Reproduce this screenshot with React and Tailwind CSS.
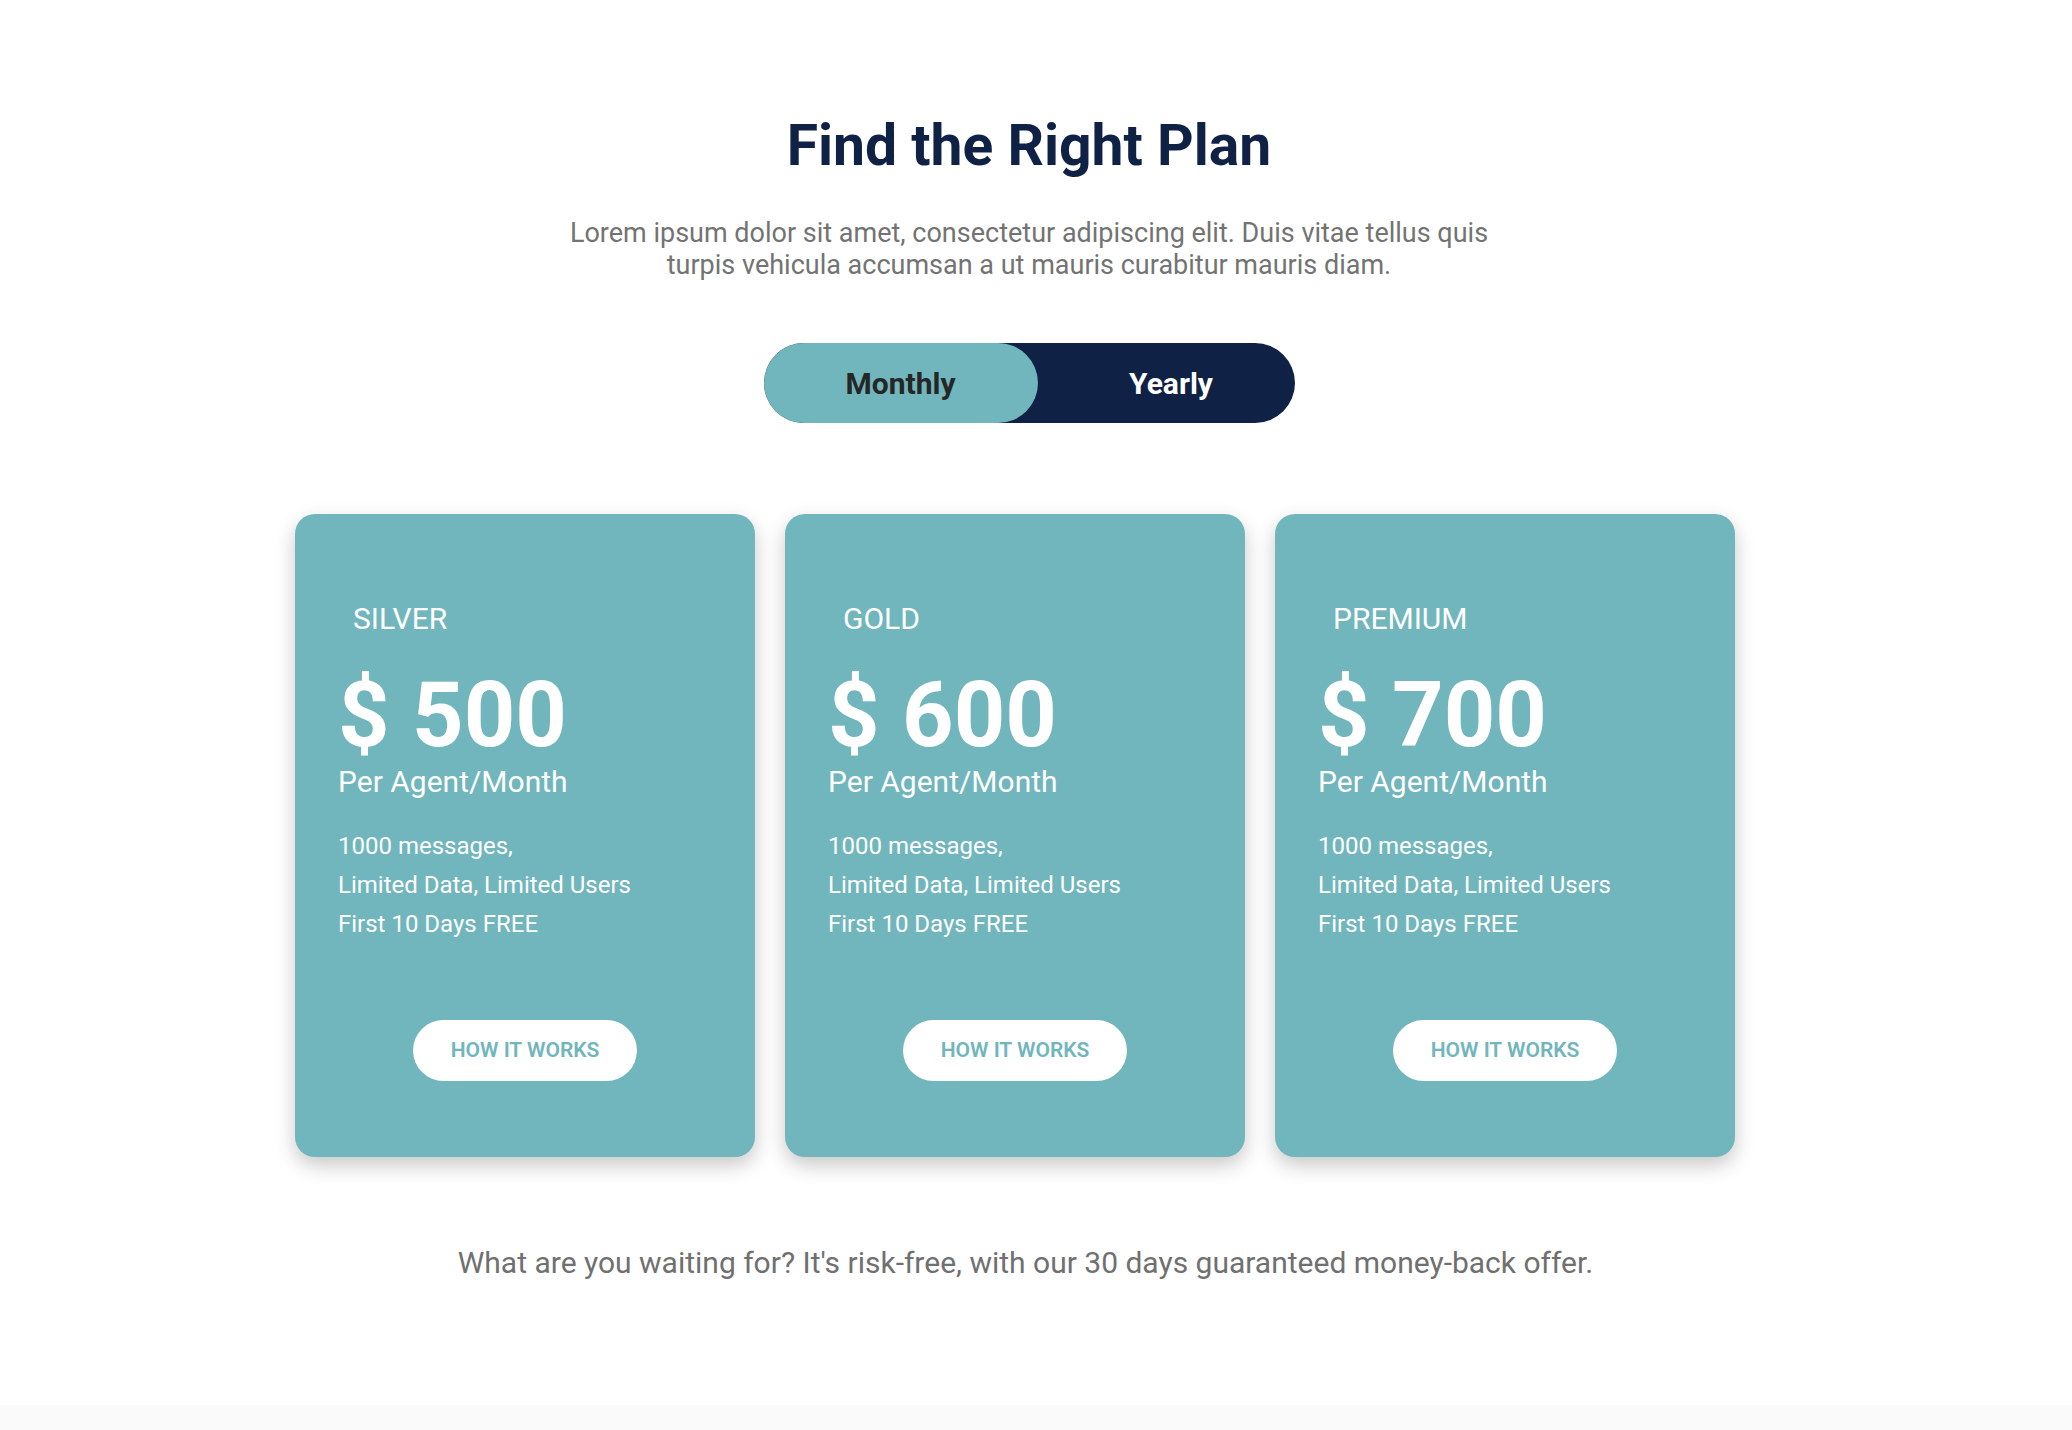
import { useState } from 'react';

const plans = [
    { name: 'SILVER', price: '$ 500' },
    { name: 'GOLD', price: '$ 600' },
    { name: 'PREMIUM', price: '$ 700' },
];

const features = ['1000 messages,', 'Limited Data, Limited Users', 'First 10 Days FREE'];

const PlanCard = ({ name, price }) => {
    return (
        <div className="w-[460px] h-[643px] rounded-[20px] bg-[#70b6bc] text-white pt-[88px] px-[43px] shadow-[0_8px_20px_rgba(0,0,0,0.22)] flex flex-col">
            <h3 className="pl-[15px] text-[30px] leading-[34px]">{name}</h3>
            <p className="mt-[35px] text-[90px] leading-[90px] font-bold">{price}</p>
            <p className="mt-[3px] text-[30px] leading-[36px]">Per Agent/Month</p>
            <ul className="mt-[27px] text-[24px] leading-[39px]">
                {features.map((f) => (
                    <li key={f}>{f}</li>
                ))}
            </ul>
            <div className="mt-[76px] flex justify-center">
                <button className="w-[224px] h-[61px] rounded-full bg-white text-[#70b6bc] text-[21px] font-semibold">
                    HOW IT WORKS
                </button>
            </div>
        </div>
    );
};

export default function App() {
    const [yearly, setYearly] = useState(false);

    return (
        <div className="min-h-[1430px] flex flex-col bg-white font-['Roboto','Liberation_Sans',sans-serif]">
            <main className="flex-1 flex flex-col items-center pr-[14px] pt-[112px]">
                <h1 className="text-[57px] leading-[68px] font-bold text-[#0f2246]">Find the Right Plan</h1>
                <p className="mt-[37px] w-[940px] text-center text-[27px] leading-[32px] text-[#737373]">
                    Lorem ipsum dolor sit amet, consectetur adipiscing elit. Duis vitae tellus quis turpis vehicula accumsan a ut mauris curabitur mauris diam.
                </p>

                {/* Billing toggle */}
                <div className="mt-[62px] w-[531px] h-[80px] rounded-full bg-[#0f2246] flex text-[30px] font-bold">
                    <button
                        onClick={() => setYearly(false)}
                        className={yearly ? "w-[274px] rounded-full text-white" : "w-[274px] rounded-full bg-[#70b6bc] text-[#262626]"}
                    >
                        Monthly
                    </button>
                    <button
                        onClick={() => setYearly(true)}
                        className={yearly ? "flex-1 pl-[10px] rounded-full bg-[#70b6bc] text-[#262626]" : "flex-1 pl-[10px] rounded-full text-white"}
                    >
                        Yearly
                    </button>
                </div>

                <div className="mt-[91px] mr-[28px] flex gap-[30px]">
                    {plans.map((p) => (
                        <PlanCard key={p.name} name={p.name} price={p.price} />
                    ))}
                </div>

                <p className="mt-[88px] mr-[7px] text-[30px] leading-[36px] text-[#707070]">
                    What are you waiting for? It's risk-free, with our 30 days guaranteed money-back offer.
                </p>
            </main>
            <div className="h-[25px] bg-[#fafafa]"></div>
        </div>
    );
}
